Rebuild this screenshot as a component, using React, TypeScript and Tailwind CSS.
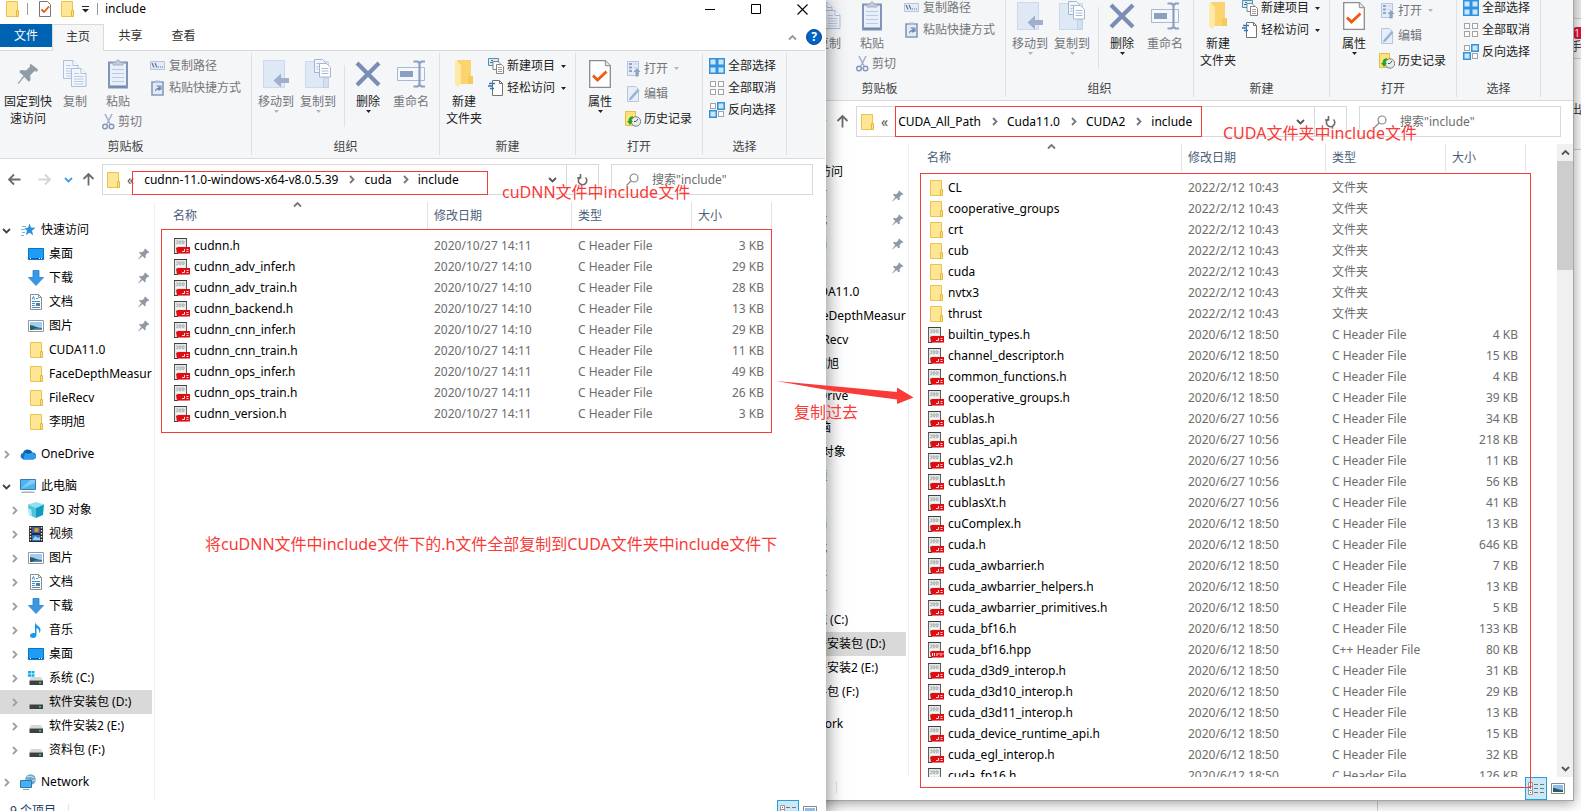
import type { ReactNode } from "react";
import clsx from "clsx";

/* ---------- icons ---------- */

interface IconProps {
  className?: string;
}

function FolderIcon({ className }: IconProps) {
  return (
    <svg width="16" height="16" viewBox="0 0 16 16" className={clsx("shrink-0", className)}>
      <path d="M2.5.5h11v15h-11z" fill="#ffe695" stroke="#e9c44c" />
      <path d="M12.5 9.5h2v6h-2z" fill="#ffe08a" stroke="#e3b93c" />
    </svg>
  );
}

function HeaderFileIcon({ hpp = false }: { hpp?: boolean }) {
  return (
    <svg width="16" height="16" viewBox="0 0 16 16" className="shrink-0">
      <path d="M0 0h13v16H0z" fill="#e4e7e4" />
      <path d="M.5 0v16M12.500 0v11" stroke="#5a6060" fill="none" />
      <path d="M0 .5h13M0 15.500h4" stroke="#3c4141" />
      <path d="M2 3h9M2 5.500h9" stroke="#b3b8b8" strokeDasharray="2 1" />
      <path d="M3 4h8" stroke="#a2a8a8" />
      <path d="M2 7.500h9" stroke="#f7f8f7" />
      <path d="M2 10 4 9h12v6.500H3z" fill="#dd0d12" />
      {hpp ? (
        <path d="M4.500 11v3M6.500 11v3M9 11v3M11 11v1.500M13 11v3M15 11v1.500" stroke="#fff" strokeWidth=".9" fill="none" />
      ) : (
        <path d="M10.500 11v2.500H8M12.500 11.500h2M12.500 13.500h2" stroke="#ffd9d9" fill="none" />
      )}
    </svg>
  );
}

function PinIcon() {
  return (
    <svg width="12" height="12" viewBox="0 0 20 20" className="ml-auto mr-[2px] shrink-0">
      <path d="M12 1l7 6-1 1.500-2-.500-3.500 4 .500 4-1.500 1.500-4-4L1 19l-.500-.500 5-7-4-3.500L3 6.500l4 .500 4-3.500L10.500 2z" fill="#8f9aa6" />
    </svg>
  );
}

function BigPinIcon() {
  return (
    <svg width="22" height="22" viewBox="0 0 22 22">
      <path d="M14 1l7 5.500-.800 2-3-.300-4 4 .300 5-1.700 1.500-4.600-4.700L1.500 21l-.800-.700 5.800-7.600-4.200-3.800 1.500-1.900 5.200.400 4-3.600-.300-2z" fill="#8f9da8" />
    </svg>
  );
}

function PageShape({ x, y }: { x: number; y: number }) {
  return (
    <g transform={`translate(${x} ${y})`}>
      <path d="M.5.5h9.500l5 5v13H.5z" fill="#f2f6fb" stroke="#aebfdb" />
      <path d="M10 .5v5h5" fill="#fff" stroke="#aebfdb" />
      <path d="M3 5.500h5M3 8.500h9.500M3 11h9.500M3 13.500h9.500M3 16h9.500" stroke="#b9cae6" />
    </g>
  );
}

function CopyIcon() {
  return (
    <svg width="26" height="30" viewBox="0 0 26 30">
      <PageShape x={1} y={1} />
      <PageShape x={9} y={9} />
    </svg>
  );
}

function PasteIcon() {
  return (
    <svg width="20" height="30" viewBox="0 0 20 30">
      <path d="M1 3.500h18v25H1z" fill="#eaf0f9" stroke="#8194b9" strokeWidth="2" />
      <path d="M2 27.500h16" stroke="#7386ab" strokeWidth="2" />
      <path d="M5 6V3.500h3C8 1.500 9 1 10 1s2 .500 2 2.500h3V6z" fill="#c5cddc" stroke="#a5b0c6" />
      <path d="M4 10.500h12M4 14.500h12M4 18.500h12M4 22.500h12" stroke="#b7cbe8" />
    </svg>
  );
}

function CutIcon() {
  return (
    <svg width="13" height="16" viewBox="0 0 13 16" fill="none">
      <path d="M3 0l5 10M10 0L5 10" stroke="#a3b3cb" strokeWidth="1.600" />
      <circle cx="3" cy="12.500" r="2.300" stroke="#8598ba" strokeWidth="1.500" />
      <circle cx="9.500" cy="12.500" r="2.300" stroke="#8598ba" strokeWidth="1.500" />
    </svg>
  );
}

function CopyPathIcon() {
  return (
    <svg width="16" height="16" viewBox="0 0 16 16" fill="none">
      <path d="M.5 3.500h14v8H.5z" fill="#e3ebf6" stroke="#b5c5dd" />
      <path d="M2 5l2 4.500M5 5l2 4.500" stroke="#5f7396" strokeWidth="1.200" />
      <path d="M8 9h1M10 9h1M12 9h1" stroke="#5f7396" strokeWidth="1.200" />
    </svg>
  );
}

function PasteShortcutIcon() {
  return (
    <svg width="16" height="16" viewBox="0 0 16 16" fill="none">
      <path d="M2 2h11v13H2z" fill="#e3ebf6" stroke="#8598ba" strokeWidth="1.600" />
      <path d="M5 2.500V1h5v1.500z" fill="#aebbd2" stroke="#aebbd2" />
      <path d="M5 12c0-3 1-4 3.500-4V5.800L11 8.500l-2.500 2.700V9.500C7 9.500 6 10 5 12z" fill="#5f7cab" />
      <path d="M6.500 6h4.500v4" stroke="#5f7cab" />
    </svg>
  );
}

function MoveToIcon() {
  return (
    <svg width="26" height="30" viewBox="0 0 26 30">
      <path d="M.5 1.500h21v27H.5z" fill="#dfe8f5" stroke="#ccd8eb" />
      <path d="M10.500 21.500 18 14.500v4.500h8v5h-8v4.500z" fill="#9fb0cb" />
    </svg>
  );
}

function CopyToIcon() {
  return (
    <svg width="26" height="32" viewBox="0 0 26 32">
      <path d="M.5 3.500h23v26H.5z" fill="#dfe8f5" stroke="#ccd8eb" />
      <path d="M18.500 20h5v9.500h-5z" fill="#d3e0f1" stroke="#c2d1e8" />
      <path d="M9.500 1.500h8l3 3v10h-11z" fill="#f2f6fb" stroke="#a5b5d0" />
      <path d="M14.500 5.500h7l4 4v9.500h-11z" fill="#fff" stroke="#a5b5d0" />
      <path d="M16.500 10.500h7M16.500 13h7M16.500 15.500h7M11.500 5.500h3M11.500 8.500h2M11.500 11h2" stroke="#a9bbd8" />
    </svg>
  );
}

function DeleteIcon() {
  return (
    <svg width="26" height="26" viewBox="0 0 26 26">
      <path d="M2 2l22 22M24 2L2 24" stroke="#7a8eb5" strokeWidth="4.200" />
    </svg>
  );
}

function RenameIcon() {
  return (
    <svg width="28" height="28" viewBox="0 0 28 28" fill="none">
      <path d="M.5 7.500h27v13H.5z" fill="#f4f7fb" stroke="#a9b9d3" />
      <path d="M3 11h13v6H3z" fill="#8b9fc3" />
      <path d="M16.500 1.500h4l2 1.500 2-1.500h3.500M16.500 26.500h4l2-1.500 2 1.500h3.500M22.500 2.500v23" stroke="#8b9fc3" strokeWidth="2.200" />
    </svg>
  );
}

function NewFolderIcon() {
  return (
    <svg width="20" height="30" viewBox="0 0 20 30">
      <path d="M3 1h14v16l2 2v6H6z" fill="#fbd46f" />
      <path d="M1 1l6 5v17l-2 5-4-2z" fill="#ffe9a6" />
      <path d="M14 17h5v8h-5z" fill="#f6c95b" />
    </svg>
  );
}

function NewItemIcon() {
  return (
    <svg width="16" height="16" viewBox="0 0 16 16" fill="none">
      <path d="M.5.5h10v7H.5z" fill="#d9ecf8" stroke="#4d8fb5" />
      <path d="M2 4.500h6M3 2.500h2" stroke="#36718f" />
      <path d="M5 3.500h5l2 2v6H5z" fill="#fff" stroke="#7d868d" />
      <path d="M8.500 6.500h5l2 2v7h-7z" fill="#fff" stroke="#7d868d" />
      <path d="M10 9.500h4M10 11.500h4M10 13.500h4" stroke="#c59090" />
    </svg>
  );
}

function EasyAccessIcon() {
  return (
    <svg width="16" height="16" viewBox="0 0 16 16" fill="none">
      <path d="M4.500.5h7l3 3v12h-10z" fill="#fff" stroke="#6f7479" />
      <path d="M11.500.5v3h3" stroke="#6f7479" />
      <path d="M1 3.500h6M0 6h5M2 8.500h4" stroke="#2f77b8" strokeWidth="1.300" />
    </svg>
  );
}

function PropertiesIcon() {
  return (
    <svg width="22" height="28" viewBox="0 0 22 28" fill="none">
      <path d="M.7.7h15.600l5 5v21.600H.7z" fill="#fff" stroke="#8c8c8c" strokeWidth="1.300" />
      <path d="M16.300.7v5h5" fill="#e8e8e8" stroke="#8c8c8c" />
      <path d="M4 15.500l4.500 4.500 9-8.500" stroke="#ee5a14" strokeWidth="2.800" />
    </svg>
  );
}

function OpenIcon() {
  return (
    <svg width="16" height="16" viewBox="0 0 16 16" fill="none">
      <path d="M2.500.5h11v14h-11z" fill="#e3ebf6" stroke="#b5c5dd" />
      <path d="M4 3h3M4 6.500h3M4 10h3" stroke="#8fa5ca" strokeWidth="1.800" />
      <path d="M8.500 3h4M8.500 6.500h3" stroke="#c3d1e6" />
      <path d="M12 7l3.500 4h-2v4.500h-3V11h-2z" fill="#8fa3c3" />
    </svg>
  );
}

function EditIcon() {
  return (
    <svg width="16" height="16" viewBox="0 0 16 16" fill="none">
      <path d="M2.500.5h8l3 3v12h-11z" fill="#e6eef9" stroke="#b5c5dd" />
      <path d="M14.500 4.500l-8 9-2.500 1 .500-2.500 8-9z" fill="#9db1d1" />
    </svg>
  );
}

function HistoryIcon() {
  return (
    <svg width="16" height="16" viewBox="0 0 16 16" fill="none">
      <path d="M.5.5h10v14H.5z" fill="#ffe27a" stroke="#e3bf45" />
      <circle cx="11" cy="10.500" r="4.700" fill="#e9ecec" stroke="#7a8080" />
      <path d="M11 10.500l2-2.500M11 10.500H9" stroke="#555" />
      <path d="M7.500 5C4 6 3.500 8 3.700 10H2l3 4 3-4H6.500C6.500 8 7 7 8.500 6.500z" fill="#23a52c" />
    </svg>
  );
}

function TilesIcon({ picked }: { picked: boolean[] }) {
  return (
    <svg width="16" height="16" viewBox="0 0 16 16">
      {picked.map((on, i) => (
        <rect
          key={i}
          x={(i % 2) * 8 + (on ? 0.75 : 1.5)}
          y={Math.floor(i / 2) * 8 + (on ? 0.75 : 1.5)}
          width={on ? 6.5 : 5}
          height={on ? 6.5 : 5}
          fill={on ? "#cbe6fa" : "#fdfdfd"}
          stroke={on ? "#2f92dd" : "#a3a3a3"}
          strokeWidth={on ? 1.5 : 1}
        />
      ))}
    </svg>
  );
}

function StarIcon() {
  return (
    <svg width="16" height="16" viewBox="0 0 16 16" className="shrink-0">
      <path d="M9.500 1.500l1.500 4 4.500.200-3.500 3 1.200 4.500-3.700-2.400-3.700 2.400 1.200-4.500L4.500 6l3.500-.300z" fill="#2b93d8" />
      <path d="M2 4.500h4M1 7.500h4M2 10.500h3M1 13.500h3" stroke="#6db8ea" />
    </svg>
  );
}

function DesktopIcon() {
  return (
    <svg width="16" height="16" viewBox="0 0 16 16" className="shrink-0">
      <path d="M.5 2.500h15v11H.5z" fill="#1e9df7" stroke="#0a74c9" />
      <path d="M1 12.500h14" stroke="#0860a8" />
      <path d="M2 12.500h1M11 12.500h1M13 12.500h1" stroke="#fff" />
    </svg>
  );
}

function DownloadIcon() {
  return (
    <svg width="16" height="16" viewBox="0 0 16 16" className="shrink-0">
      <path d="M5 .5h6v7h4.500L8 15.500.5 7.500H5z" fill="#3a97e4" stroke="#2380cf" strokeWidth=".8" />
    </svg>
  );
}

function DocumentIcon() {
  return (
    <svg width="16" height="16" viewBox="0 0 16 16" fill="none" className="shrink-0">
      <path d="M2.500.5h8l3 3v12h-11z" fill="#fff" stroke="#8b9296" />
      <path d="M10.500.5v3h3" stroke="#8b9296" />
      <path d="M4 5.500l1.500-3 1 3M8 4.500h2M4 7.500h8M4 9.500h3M4 11.500h3M4 13.500h8" stroke="#3d8fca" />
      <path d="M8 9h4v3H8z" fill="#5d7d91" />
    </svg>
  );
}

function PictureIcon() {
  return (
    <svg width="16" height="16" viewBox="0 0 16 16" className="shrink-0">
      <path d="M.5 2.500h15v11H.5z" fill="#fff" stroke="#949a9e" />
      <path d="M2 4h12v8H2z" fill="#9fcdf3" />
      <path d="M2 7c4 .500 6 2.500 12 3v2H2z" fill="#2d5d63" />
      <path d="M7 10.500h7V12H4z" fill="#5f8fb8" />
    </svg>
  );
}

function CloudIcon() {
  return (
    <svg width="16" height="16" viewBox="0 0 16 16" className="shrink-0">
      <path d="M3.500 13.500A3.500 3.500 0 0 1 3 6.700 5 5 0 0 1 12.300 6.500 3.500 3.500 0 0 1 13 13.500z" fill="#1374c8" />
      <path d="M5 7.500a4.500 4.500 0 0 1 7.500-1L16 9.500c0 2.500-1 4-3 4H3.500z" fill="#2c9de8" />
      <path d="M4 6A5 5 0 0 1 12.300 6.500L8 8z" fill="#0b5aa8" />
    </svg>
  );
}

function ComputerIcon() {
  return (
    <svg width="16" height="16" viewBox="0 0 16 16" className="shrink-0">
      <path d="M.5 1.500h15v10H.5z" fill="#4bb4f3" stroke="#3d7ca8" />
      <path d="M1 11l9-9h5v3z" fill="#7fcdfa" />
      <path d="M1 15h14l-1-1.500H2z" fill="#a8b2c0" />
    </svg>
  );
}

function CubeIcon() {
  return (
    <svg width="16" height="16" viewBox="0 0 16 16" className="shrink-0">
      <path d="M8 0l8 2.500L8 6 0 2.500z" fill="#8fe0f0" />
      <path d="M0 2.500L8 6v10l-7-3z" fill="#4fc3dc" />
      <path d="M16 2.500L8 6v10l7-3z" fill="#139ac0" />
      <path d="M0 7h3l1 7-3-1z" fill="#b3edf5" />
    </svg>
  );
}

function VideoIcon() {
  return (
    <svg width="16" height="16" viewBox="0 0 16 16" className="shrink-0">
      <path d="M1 0h14v16H1z" fill="#2b2b2b" />
      <path d="M2.500 1v14M13.500 1v14" stroke="#e6e6e6" strokeWidth="1.400" strokeDasharray="1.500 1.500" />
      <path d="M4 1h8v6H4z" fill="#3a5ea8" />
      <path d="M4 9h8v6H4z" fill="#2b78cf" />
      <circle cx="8.500" cy="4" r="2.300" fill="#d99a2b" />
      <path d="M5 13l2-3 3 2 2-1v3H5z" fill="#a5c9ef" />
    </svg>
  );
}

function MusicIcon() {
  return (
    <svg width="16" height="16" viewBox="0 0 16 16" className="shrink-0">
      <path d="M7 0c.5 3.500 6 4 5.500 8.500-.3 1.500-1 2.500-1.500 2.500.8-3-1-4.500-2.500-5v7c0 2-1.500 3-3.500 3s-3-1-3-2.500S3.500 11 5.500 11c.5 0 1 0 1.500.2z" fill="#1699e8" />
    </svg>
  );
}

function DriveIcon({ system = false }: { system?: boolean }) {
  return (
    <svg width="16" height="16" viewBox="0 0 16 16" className="shrink-0">
      <path d="M3 7h10l2 3.500H1.500z" fill="#d5d8db" />
      <path d="M1.500 10.500H15V15H1.500z" fill="#3d4144" />
      <path d="M11 12h2v1.500h-2z" fill="#43e04b" />
      {system && (
        <>
          <path d="M0 0h7v7H0z" fill="#fff" />
          <path d="M0 1h3v2.500H0zM3.500 1h3v2.500h-3zM0 4.200h3v2.500H0zM3.500 4.200h3v2.500h-3z" fill="#12b0ea" />
        </>
      )}
    </svg>
  );
}

function NetworkIcon() {
  return (
    <svg width="16" height="16" viewBox="0 0 16 16" className="shrink-0">
      <circle cx="10.500" cy="5.500" r="5.300" fill="#6fa9c8" />
      <path d="M7 3q4-2 7 1M6 6q5 2 9.500 0" stroke="#cde6f2" fill="none" />
      <path d="M.5 6.500h11v7H.5z" fill="#42b2f2" stroke="#2f79ad" />
      <path d="M3 15.500h6" stroke="#8ea0b2" />
    </svg>
  );
}

function Chevron({ dir, className }: { dir: "right" | "down" | "up"; className?: string }) {
  const d = {
    right: "M3 1l3.500 3.500L3 8",
    down: "M1 3l3.500 3.500L8 3",
    up: "M1 6.500L4.500 3 8 6.500",
  }[dir];
  return (
    <svg width="9" height="9" viewBox="0 0 9 9" fill="none" className={clsx("shrink-0", className)}>
      <path d={d} stroke="currentColor" strokeWidth="1.800" />
    </svg>
  );
}

function Caret({ className }: IconProps) {
  return (
    <svg width="5" height="3" viewBox="0 0 5 3" className={className}>
      <path d="M0 0h5L2.500 3z" fill="currentColor" />
    </svg>
  );
}

function Arrow({ className }: IconProps) {
  return (
    <svg width="13" height="13" viewBox="0 0 13 13" fill="none" className={className}>
      <path d="M12.500 6.500H1.500M6 1.500l-5 5 5 5" stroke="currentColor" strokeWidth="1.800" />
    </svg>
  );
}

/* ---------- data ---------- */

interface FileRow {
  name: string;
  date: string;
  type: string;
  size: string;
}

const cHeader = (name: string, date: string, size: string): FileRow => ({ name, date, type: "C Header File", size: `${size} KB` });
const folder = (name: string): FileRow => ({ name, date: "2022/2/12 10:43", type: "文件夹", size: "" });

const CUDNN_FILES: FileRow[] = [
  cHeader("cudnn.h", "2020/10/27 14:11", "3"),
  cHeader("cudnn_adv_infer.h", "2020/10/27 14:10", "29"),
  cHeader("cudnn_adv_train.h", "2020/10/27 14:10", "28"),
  cHeader("cudnn_backend.h", "2020/10/27 14:10", "13"),
  cHeader("cudnn_cnn_infer.h", "2020/10/27 14:10", "29"),
  cHeader("cudnn_cnn_train.h", "2020/10/27 14:11", "11"),
  cHeader("cudnn_ops_infer.h", "2020/10/27 14:11", "49"),
  cHeader("cudnn_ops_train.h", "2020/10/27 14:11", "26"),
  cHeader("cudnn_version.h", "2020/10/27 14:11", "3"),
];

const CUDA_FILES: FileRow[] = [
  folder("CL"),
  folder("cooperative_groups"),
  folder("crt"),
  folder("cub"),
  folder("cuda"),
  folder("nvtx3"),
  folder("thrust"),
  cHeader("builtin_types.h", "2020/6/12 18:50", "4"),
  cHeader("channel_descriptor.h", "2020/6/12 18:50", "15"),
  cHeader("common_functions.h", "2020/6/12 18:50", "4"),
  cHeader("cooperative_groups.h", "2020/6/12 18:50", "39"),
  cHeader("cublas.h", "2020/6/27 10:56", "34"),
  cHeader("cublas_api.h", "2020/6/27 10:56", "218"),
  cHeader("cublas_v2.h", "2020/6/27 10:56", "11"),
  cHeader("cublasLt.h", "2020/6/27 10:56", "56"),
  cHeader("cublasXt.h", "2020/6/27 10:56", "41"),
  cHeader("cuComplex.h", "2020/6/12 18:50", "13"),
  cHeader("cuda.h", "2020/6/12 18:50", "646"),
  cHeader("cuda_awbarrier.h", "2020/6/12 18:50", "7"),
  cHeader("cuda_awbarrier_helpers.h", "2020/6/12 18:50", "13"),
  cHeader("cuda_awbarrier_primitives.h", "2020/6/12 18:50", "5"),
  cHeader("cuda_bf16.h", "2020/6/12 18:50", "133"),
  { name: "cuda_bf16.hpp", date: "2020/6/12 18:50", type: "C++ Header File", size: "80 KB" },
  cHeader("cuda_d3d9_interop.h", "2020/6/12 18:50", "31"),
  cHeader("cuda_d3d10_interop.h", "2020/6/12 18:50", "29"),
  cHeader("cuda_d3d11_interop.h", "2020/6/12 18:50", "13"),
  cHeader("cuda_device_runtime_api.h", "2020/6/12 18:50", "15"),
  cHeader("cuda_egl_interop.h", "2020/6/12 18:50", "32"),
  cHeader("cuda_fp16.h", "2020/6/12 18:50", "126"),
];

interface NavItem {
  label: string;
  icon: ReactNode;
  pinned?: boolean;
  active?: boolean;
}

interface NavGroup extends NavItem {
  open?: boolean;
  expandable?: boolean;
  items?: NavItem[];
}

const NAV: NavGroup[] = [
  {
    label: "快速访问",
    icon: <StarIcon />,
    open: true,
    items: [
      { label: "桌面", icon: <DesktopIcon />, pinned: true },
      { label: "下载", icon: <DownloadIcon />, pinned: true },
      { label: "文档", icon: <DocumentIcon />, pinned: true },
      { label: "图片", icon: <PictureIcon />, pinned: true },
      { label: "CUDA11.0", icon: <FolderIcon /> },
      { label: "FaceDepthMeasure", icon: <FolderIcon /> },
      { label: "FileRecv", icon: <FolderIcon /> },
      { label: "李明旭", icon: <FolderIcon /> },
    ],
  },
  { label: "OneDrive", icon: <CloudIcon /> },
  {
    label: "此电脑",
    icon: <ComputerIcon />,
    open: true,
    expandable: true,
    items: [
      { label: "3D 对象", icon: <CubeIcon /> },
      { label: "视频", icon: <VideoIcon /> },
      { label: "图片", icon: <PictureIcon /> },
      { label: "文档", icon: <DocumentIcon /> },
      { label: "下载", icon: <DownloadIcon /> },
      { label: "音乐", icon: <MusicIcon /> },
      { label: "桌面", icon: <DesktopIcon /> },
      { label: "系统 (C:)", icon: <DriveIcon system /> },
      { label: "软件安装包 (D:)", icon: <DriveIcon />, active: true },
      { label: "软件安装2 (E:)", icon: <DriveIcon /> },
      { label: "资料包 (F:)", icon: <DriveIcon /> },
    ],
  },
  { label: "Network", icon: <NetworkIcon /> },
];

/* ---------- ribbon ---------- */

interface BigButtonProps {
  icon: ReactNode;
  lines: string[];
  width: string;
  caret?: boolean;
  disabled?: boolean;
}

function BigButton({ icon, lines, width, caret = false, disabled = false }: BigButtonProps) {
  return (
    <button className={clsx("flex flex-col items-center pt-[5px] leading-[17px] shrink-0", width, disabled ? "text-[#737578]" : "text-[#222]")}>
      <span className="flex items-center justify-center h-8 mb-[3px]">{icon}</span>
      {lines.map((line) => (
        <span key={line} className="whitespace-nowrap">{line}</span>
      ))}
      {caret && <Caret className={disabled ? "text-[#b5b5b5]" : "text-[#222]"} />}
    </button>
  );
}

interface SmallButtonProps {
  icon: ReactNode;
  label: string;
  caret?: boolean;
  disabled?: boolean;
  tall?: boolean;
}

function SmallButton({ icon, label, caret = false, disabled = false, tall = false }: SmallButtonProps) {
  return (
    <button className={clsx("flex items-center gap-[3px] whitespace-nowrap", tall ? "h-[25px]" : "h-[22px]", disabled ? "text-[#737578]" : "text-[#222]")}>
      {icon}
      <span>{label}</span>
      {caret && <Caret className={clsx("ml-[3px]", disabled && "text-[#b5b5b5]")} />}
    </button>
  );
}

function RibbonGroup({ label, className, children }: { label: string; className: string; children: ReactNode }) {
  return (
    <div className="flex flex-col border-r border-[#dfe1e4] shrink-0">
      <div className={clsx("flex flex-1", className)}>{children}</div>
      <div className="h-4 text-center leading-4 text-[#444]">{label}</div>
    </div>
  );
}

function Ribbon() {
  return (
    <div className="flex h-[108px] shrink-0 bg-[#f5f6f8] border-b border-[#d9dadc] pt-[2px] pb-[3px]">
      <RibbonGroup label="剪贴板" className="pl-1 pr-[10px]">
        <BigButton icon={<BigPinIcon />} lines={["固定到快", "速访问"]} width="w-[48px]" />
        <BigButton icon={<CopyIcon />} lines={["复制"]} width="w-[46px]" disabled />
        <div className="flex flex-col w-[52px]">
          <BigButton icon={<PasteIcon />} lines={["粘贴"]} width="w-10" disabled />
          <div className="pl-1 pt-px">
            <SmallButton icon={<CutIcon />} label="剪切" disabled />
          </div>
        </div>
        <div className="pt-[2px]">
          <SmallButton icon={<CopyPathIcon />} label="复制路径" disabled />
          <SmallButton icon={<PasteShortcutIcon />} label="粘贴快捷方式" disabled />
        </div>
      </RibbonGroup>

      <RibbonGroup label="组织" className="pl-[3px] pr-2">
        <BigButton icon={<MoveToIcon />} lines={["移动到"]} width="w-[42px]" caret disabled />
        <BigButton icon={<CopyToIcon />} lines={["复制到"]} width="w-[42px]" caret disabled />
        <div className="w-px ml-[5px] my-3 bg-[#dfe1e4]" />
        <BigButton icon={<DeleteIcon />} lines={["删除"]} width="w-[46px]" caret />
        <BigButton icon={<RenameIcon />} lines={["重命名"]} width="w-10" disabled />
      </RibbonGroup>

      <RibbonGroup label="新建" className="pl-1 pr-[9px]">
        <BigButton icon={<NewFolderIcon />} lines={["新建", "文件夹"]} width="w-10" />
        <div className="pl-1 pt-[2px]">
          <SmallButton icon={<NewItemIcon />} label="新建项目" caret />
          <SmallButton icon={<EasyAccessIcon />} label="轻松访问" caret />
        </div>
      </RibbonGroup>

      <RibbonGroup label="打开" className="pl-1 pr-[10px]">
        <BigButton icon={<PropertiesIcon />} lines={["属性"]} width="w-10" caret />
        <div className="pl-[5px] pt-[3px]">
          <SmallButton icon={<OpenIcon />} label="打开" caret disabled tall />
          <SmallButton icon={<EditIcon />} label="编辑" disabled tall />
          <SmallButton icon={<HistoryIcon />} label="历史记录" tall />
        </div>
      </RibbonGroup>

      <RibbonGroup label="选择" className="pl-[6px] pr-[10px]">
        <div className="pt-[2px]">
          <SmallButton icon={<TilesIcon picked={[true, true, true, true]} />} label="全部选择" />
          <SmallButton icon={<TilesIcon picked={[false, false, false, false]} />} label="全部取消" />
          <SmallButton icon={<TilesIcon picked={[false, true, true, false]} />} label="反向选择" />
        </div>
      </RibbonGroup>
    </div>
  );
}

/* ---------- window parts ---------- */

function TitleBar({ title }: { title: string }) {
  return (
    <header className="flex items-center h-6 pb-[6px] pl-1 shrink-0">
      <FolderIcon />
      <span className="w-px h-3 ml-[7px] bg-[#999]" />
      <svg width="12" height="16" viewBox="0 0 12 16" fill="none" className="ml-[11px]">
        <path d="M.5.5h8l3 3v12H.5z" fill="#fff" stroke="#777" />
        <path d="M2.500 8.500l2.500 2.500 5-5.500" stroke="#e8591c" strokeWidth="1.800" />
      </svg>
      <FolderIcon className="ml-2" />
      <svg width="7" height="7" viewBox="0 0 7 7" className="ml-[7px]">
        <path d="M0 .5h7" stroke="#222" />
        <path d="M0 3h7L3.500 6.500z" fill="#222" />
      </svg>
      <span className="w-px h-3 ml-2 bg-[#999]" />
      <span className="ml-[7px] text-black">{title}</span>
      <div className="flex ml-auto text-black">
        <button aria-label="最小化" className="flex justify-center w-[46px]">
          <svg width="11" height="11" viewBox="0 0 11 11"><path d="M0 5.500h10" stroke="currentColor" /></svg>
        </button>
        <button aria-label="最大化" className="flex justify-center w-[46px]">
          <svg width="11" height="11" viewBox="0 0 11 11" fill="none"><path d="M.5.5h9v9h-9z" stroke="currentColor" /></svg>
        </button>
        <button aria-label="关闭" className="flex justify-center w-[46px]">
          <svg width="11" height="11" viewBox="0 0 11 11"><path d="M.5.5l10 10M10.500.5l-10 10" stroke="currentColor" strokeWidth="1.100" /></svg>
        </button>
      </div>
    </header>
  );
}

function TabStrip() {
  return (
    <div className="flex h-[27px] shrink-0 border-b border-[#d9dadc] text-[#333]">
      <button className="w-[52px] h-[23px] bg-[#0063b1] text-white">文件</button>
      <button className="w-[52px] h-[27px] pb-[3px] bg-[#f5f6f8] border border-b-0 border-[#d9dadc]">主页</button>
      <button className="w-[53px] pb-[2px]">共享</button>
      <button className="w-[53px] pb-[2px]">查看</button>
      <div className="flex items-center gap-[9px] ml-auto mr-[3px]">
        <button aria-label="折叠功能区"><Chevron dir="up" className="text-[#999]" /></button>
        <button aria-label="帮助" className="size-4 rounded-full bg-[#0063c4] border border-[#0a4a8c] text-white text-xs leading-[14px] font-bold">?</button>
      </div>
    </div>
  );
}

function AddressBar({ path }: { path: string[] }) {
  return (
    <div className="flex items-center h-[43px] pt-[5px] pb-[7px] pr-3 shrink-0">
      <div className="flex items-center w-[102px] pl-2 shrink-0">
        <button aria-label="后退"><Arrow className="text-[#6b6b6b]" /></button>
        <button aria-label="前进" className="ml-[17px]"><Arrow className="rotate-180 text-[#d5d5d5]" /></button>
        <button aria-label="最近位置" className="ml-[13px]"><Chevron dir="down" className="text-[#3d9df0]" /></button>
        <button aria-label="向上" className="ml-[9px]"><Arrow className="rotate-90 text-[#6b6b6b]" /></button>
      </div>
      <div className="flex flex-1 items-center h-[31px] border border-[#d9d9d9] text-black">
        <FolderIcon className="ml-[2px]" />
        <span className="ml-[6px] mr-[10px] text-[#555] text-sm leading-4">«</span>
        {path.map((part, i) => (
          <div key={part} className="flex items-center whitespace-nowrap">
            {i > 0 && <Chevron dir="right" className="ml-[9px] mr-2 text-[#777]" />}
            <a href="#">{part}</a>
          </div>
        ))}
        <button aria-label="展开" className="ml-auto mr-[9px]"><Chevron dir="down" className="text-[#555]" /></button>
        <button aria-label="刷新" className="flex items-center justify-center w-8 h-full border-l border-[#d9d9d9]">
          <svg width="11" height="12" viewBox="0 0 11 12" fill="none">
            <path d="M3 3.200A4.200 4.200 0 1 0 8.500 3.500" stroke="#6b6b6b" strokeWidth="1.600" />
            <path d="M3.500 0v4H0" stroke="#6b6b6b" strokeWidth="1.600" />
          </svg>
        </button>
      </div>
      <label className="flex items-center w-[202px] h-[31px] ml-3 pl-[14px] border border-[#d9d9d9]">
        <svg width="13" height="13" viewBox="0 0 13 13" fill="none" className="shrink-0">
          <circle cx="8" cy="5" r="4" stroke="#8a8a8a" strokeWidth="1.200" />
          <path d="M5 8L.5 12.500" stroke="#8a8a8a" strokeWidth="1.200" />
        </svg>
        <input type="search" aria-label="搜索" placeholder={'搜索"include"'} className="ml-[13px] w-full min-w-0 outline-none placeholder:text-[#6d6d6d]" />
      </label>
    </div>
  );
}

function NavTree() {
  return (
    <nav className="flex flex-col gap-2 w-[152px] pt-4 shrink-0 overflow-hidden text-black">
      {NAV.map((group) => (
        <div key={group.label}>
          <a href="#" className="flex items-center h-6 pl-[2px] whitespace-nowrap">
            <Chevron dir={group.open ? "down" : "right"} className={group.open ? "text-[#444]" : "text-[#a0a0a0]"} />
            <span className="ml-[9px] mr-[5px]">{group.icon}</span>
            {group.label}
          </a>
          {group.items?.map((item) => (
            <a
              key={item.label}
              href="#"
              className={clsx("flex items-center h-6 whitespace-nowrap", group.expandable ? "pl-[10px]" : "pl-7", item.active && "bg-[#d9d9d9]")}
            >
              {group.expandable && <Chevron dir="right" className="mr-[9px] text-[#a0a0a0]" />}
              <span className="mr-[5px] shrink-0">{item.icon}</span>
              {item.label}
              {item.pinned && <PinIcon />}
            </a>
          ))}
        </div>
      ))}
    </nav>
  );
}

const HEAD_CELL = "flex items-center h-[27px] mb-[6px] border-r border-[#e2e2e2] font-normal text-[#4c607a]";

function FileTable({ rows }: { rows: FileRow[] }) {
  return (
    <table className="table-fixed w-[617px] h-fit shrink-0 border-collapse text-[#6d6d6d] whitespace-nowrap">
      <thead>
        <tr className="text-left">
          <th className="w-[273px] p-0">
            <div className={clsx(HEAD_CELL, "relative pl-[18px]")}>
              名称
              <span className="absolute inset-x-0 -top-[2px] flex justify-center pl-3">
                <Chevron dir="up" className="text-[#777]" />
              </span>
            </div>
          </th>
          <th className="w-36 p-0"><div className={clsx(HEAD_CELL, "pl-[6px]")}>修改日期</div></th>
          <th className="w-[120px] p-0"><div className={clsx(HEAD_CELL, "pl-[6px]")}>类型</div></th>
          <th className="w-20 p-0"><div className={clsx(HEAD_CELL, "pl-[6px]")}>大小</div></th>
        </tr>
      </thead>
      <tbody>
        {rows.map((row) => (
          <tr key={row.name} className="h-[21px]">
            <td className="p-0 pl-[19px]">
              <div className="flex items-center gap-1 h-[21px] text-black">
                {row.type === "文件夹" ? <FolderIcon /> : <HeaderFileIcon hpp={row.name.endsWith(".hpp")} />}
                {row.name}
              </div>
            </td>
            <td className="p-0 pl-[6px]">{row.date}</td>
            <td className="p-0 pl-[6px]">{row.type}</td>
            <td className="p-0 pr-2 text-right">{row.size}</td>
          </tr>
        ))}
      </tbody>
    </table>
  );
}

function ScrollBar() {
  return (
    <div className="flex flex-col w-4 ml-auto bg-[#f0f0f0] text-[#555]">
      <div className="flex items-center justify-center h-[17px]"><Chevron dir="up" /></div>
      <div className="h-[109px] bg-[#cdcdcd]" />
      <div className="flex items-center justify-center h-[17px] mt-auto"><Chevron dir="down" /></div>
    </div>
  );
}

function StatusBar({ count }: { count: number }) {
  return (
    <footer className="flex h-[23px] shrink-0 pl-[10px] pr-1 text-[#1e3a5f]">
      <span className="pt-[3px]">{count} 个项目</span>
      <span className="w-px h-3 ml-3 mt-1 bg-[#e5e5e5]" />
      <button aria-label="详细信息" className="flex items-center justify-center w-[22px] h-[23px] ml-auto bg-[#cce8f6] border border-[#26a0da]">
        <svg width="17" height="13" viewBox="0 0 17 13" fill="none">
          <path d="M.5.5h4v12h-4zM.5 4.500h4M.5 8.500h4" fill="#fff" stroke="#999" />
          <path d="M2 2.500h1M2 10.500h1" stroke="#c33" />
          <path d="M2 6.500h1" stroke="#36c" />
          <path d="M6 2.500h4M12 2.500h4M6 6.500h4M12 6.500h4M6 10.500h4M12 10.500h4" stroke="#777" />
        </svg>
      </button>
      <button aria-label="大缩略图" className="flex items-center justify-center w-[22px] h-[23px]">
        <svg width="14" height="11" viewBox="0 0 14 11">
          <path d="M.5.5h13v10H.5z" fill="#fff" stroke="#888" />
          <path d="M2 2h10v7H2z" fill="#8cbcf0" />
          <path d="M2 5c4 0 5 2 10 2v2H2z" fill="#2d5d63" />
        </svg>
      </button>
    </footer>
  );
}

interface ExplorerProps {
  path: string[];
  rows: FileRow[];
  count: number;
  scroll?: boolean;
  className: string;
}

function Explorer({ path, rows, count, scroll = false, className }: ExplorerProps) {
  return (
    <section className={clsx("absolute flex flex-col bg-white", className)}>
      <TitleBar title="include" />
      <TabStrip />
      <Ribbon />
      <AddressBar path={path} />
      <div className="flex flex-1 min-h-0 overflow-hidden">
        <NavTree />
        <div className="w-px ml-[2px] bg-[#f0f0f0]" />
        <FileTable rows={rows} />
        {scroll && <ScrollBar />}
      </div>
      <StatusBar count={count} />
    </section>
  );
}

/* ---------- red markup ---------- */

function Markup() {
  return (
    <div className="absolute inset-0 pointer-events-none text-base leading-6 text-[#f93a37] whitespace-nowrap">
      <div className="absolute left-[132px] top-[171px] w-[356px] h-6 border border-[#f93a37]" />
      <div className="absolute left-[161px] top-[229px] w-[611px] h-[204px] border border-[#f93a37]" />
      <div className="absolute left-[895px] top-[106px] w-[307px] h-[31px] border border-[#f93a37]" />
      <div className="absolute left-[920px] top-[173px] w-[611px] h-[615px] border border-[#f93a37]" />
      <span className="absolute left-[502px] top-[180px]">cuDNN文件中include文件</span>
      <span className="absolute left-[1223px] top-[121px]">CUDA文件夹中include文件</span>
      <span className="absolute left-[205px] top-[532px]">将cuDNN文件中include文件下的.h文件全部复制到CUDA文件夹中include文件下</span>
      <span className="absolute left-[794px] top-[400px]">复制过去</span>
      <svg width="140" height="26" viewBox="0 0 140 26" className="absolute left-[776px] top-[380px]">
        <path d="M0 1l121 11V7.500l16.500 10L121 24v-4.500L60 11.500z" fill="#f93a37" />
      </svg>
    </div>
  );
}

function Backdrop() {
  return (
    <div className="absolute inset-0 flex flex-col bg-white text-[#444]">
      <div className="h-[19px] bg-[#f0f0f0] border-b border-[#ccc]" />
      <div className="flex flex-col items-end h-10 pt-2 bg-[#f5f5f5] border-b border-[#ccc]">
        <span className="w-2 h-3 rounded-l bg-[#e8103c] text-white text-[10px] leading-3 text-center">1</span>
        <span className="w-[11px] leading-4">手</span>
      </div>
      <div className="flex items-center justify-end h-[91px] pt-3 bg-[#fafafa] border-b border-[#ccc]">
        <span className="w-[11px]">出</span>
      </div>
      <div className="flex-1 ml-[1377px] border-l border-[#ccc]" />
    </div>
  );
}

export default function App() {
  return (
    <main className="relative h-screen overflow-hidden text-xs font-['Noto_Sans','Noto_Sans_CJK_SC',sans-serif]">
      <Backdrop />
      <Explorer
        path={["CUDA_All_Path", "Cuda11.0", "CUDA2", "include"]}
        rows={CUDA_FILES}
        count={128}
        scroll
        className="left-[754px] -top-[58px] w-[820px] h-[859px] border-r border-b border-[#a6a6a6] shadow-[0_2px_12px_rgba(0,0,0,0.4)]"
      />
      <Explorer
        path={["cudnn-11.0-windows-x64-v8.0.5.39", "cuda", "include"]}
        rows={CUDNN_FILES}
        count={9}
        className="left-0 top-0 w-[826px] h-[823px] border-r border-white shadow-[0_0_18px_rgba(0,0,0,0.5)]"
      />
      <Markup />
    </main>
  );
}
